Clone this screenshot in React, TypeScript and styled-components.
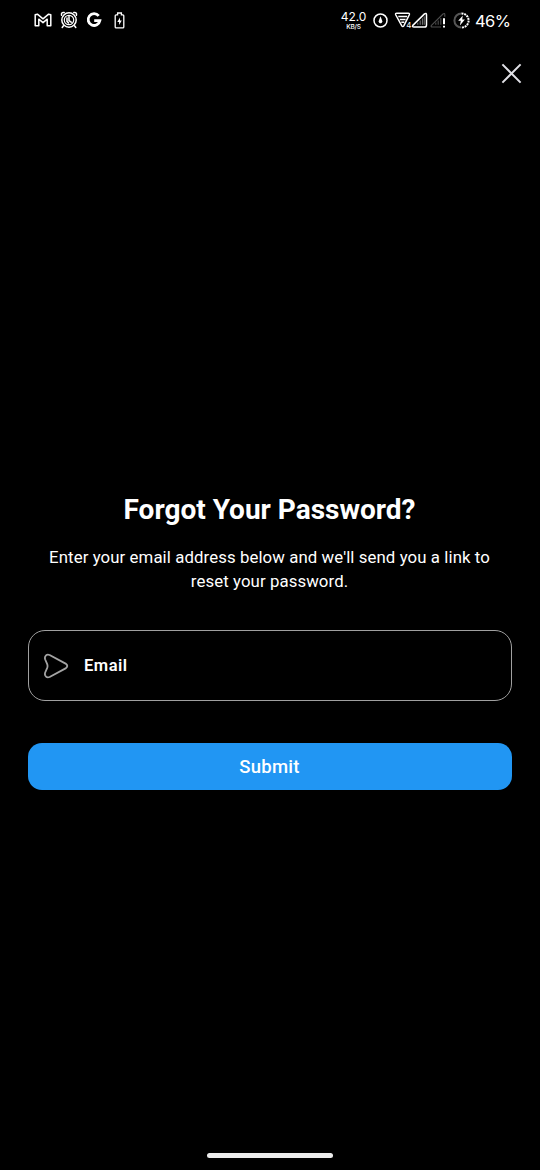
import React from "react";
import styled, { createGlobalStyle } from "styled-components";

const GlobalStyle = createGlobalStyle`
  *, *::before, *::after { box-sizing: border-box; }
  body { margin: 0; background: #000; font-family: Roboto, sans-serif; color: #fff; }
  svg { display: block; flex: none; }
`;

const Screen = styled.main`
  width: 540px;
  height: 1170px;
  display: flex;
  flex-direction: column;
  background: #000;
  overflow: hidden;
`;

const StatusBar = styled.header`
  height: 40px;
  padding: 0 30px 0 34px;
  display: flex;
  align-items: center;
  justify-content: space-between;
`;

const StatusGroup = styled.div`
  display: flex;
  align-items: center;
`;

const Gap = styled.span<{ $w: number }>`
  width: ${(p) => p.$w}px;
  flex: none;
`;

const Speed = styled.div`
  width: 25px;
  padding-top: 1px;
  display: flex;
  flex-direction: column;
  align-items: center;
  white-space: nowrap;
`;

const SpeedValue = styled.span`
  font: 400 12px/12px Inter, sans-serif;
  letter-spacing: -0.1px;
`;

const SpeedUnit = styled.span`
  font: 500 6.5px/8px Inter, sans-serif;
  letter-spacing: -0.2px;
`;

const Battery = styled.span`
  width: 35px;
  padding-top: 1px;
  font: 400 16.5px/20px Inter, sans-serif;
  letter-spacing: -0.6px;
  white-space: nowrap;
`;

const TopBar = styled.div`
  height: 68px;
  padding: 23px 18px 0;
  display: flex;
  justify-content: flex-end;
  align-items: flex-start;
`;

const IconButton = styled.button`
  padding: 0;
  border: 0;
  background: none;
  color: #e0e0e6;
`;

const Form = styled.form`
  flex: 1;
  padding: 383px 28px 0;
  display: flex;
  flex-direction: column;
`;

const Title = styled.h1`
  margin: 0 1px 0 0;
  text-align: center;
  font-size: 28px;
  line-height: 38px;
  font-weight: 700;
`;

const Description = styled.p`
  margin: 17px 1px 0 0;
  text-align: center;
  font-size: 16.8px;
  line-height: 23.5px;
  letter-spacing: 0.09px;
`;

const Field = styled.label`
  height: 71px;
  margin-top: 37px;
  padding: 0 0 0 14px;
  display: flex;
  align-items: center;
  gap: 15px;
  border: 1px solid #a0a0a0;
  border-radius: 17px;
  font-size: 16.5px;
  line-height: 20px;
  font-weight: 600;
  letter-spacing: 0.5px;

  svg { margin-top: 1px; }
`;

const SubmitButton = styled.button`
  height: 47px;
  margin-top: 42px;
  padding: 1px 1px 0 0;
  border: 0;
  border-radius: 14px;
  background: #2196f3;
  color: #fff;
  font: 500 18.5px/46px Roboto, sans-serif;
  letter-spacing: 0.3px;
`;

const HomeArea = styled.footer`
  height: 17px;
  display: flex;
  justify-content: center;
`;

const HomeIndicator = styled.div`
  width: 126px;
  height: 5px;
  border-radius: 3px;
  background: #ececec;
`;

const MailIcon = () => (
  <svg width="18" height="14" viewBox="0 0 18 14" fill="none" stroke="#fff" strokeWidth="1.5" strokeLinejoin="round">
    <path d="M1.2 12.8V1.8L3.4 1.2 9 5.8l5.6-4.6 2.2.6v11h-3.6V6.2L9 9.7 4.8 6.2v6.6z" />
  </svg>
);

const AlarmIcon = () => (
  <svg width="18" height="18" viewBox="0 0 18 18" fill="none" stroke="#fff" strokeWidth="1.5" strokeLinecap="round">
    <circle cx="9" cy="9" r="7.2" />
    <circle cx="9" cy="9" r="4.7" strokeWidth="1.2" />
    <path d="M9 5.4v4.2l2.2 1.6M7 7v3.4l1.6 1.6M1.6 4.2Q.8 1 4.2 1.6M13.8 1.6Q17.2 1 16.4 4.2M3.5 14.8l-1.3 1.7M14.5 14.8l1.3 1.7" />
  </svg>
);

const GoogleIcon = () => (
  <svg width="16" height="16" viewBox="0 0 16 16" fill="none" stroke="#fff" strokeWidth="2.8">
    <path d="M12.7 3.9A5.9 5.9 0 1 0 13.9 8.6H8.2" />
  </svg>
);

const BatteryIcon = () => (
  <svg width="11" height="17" viewBox="0 0 11 17" fill="none" stroke="#fff" strokeWidth="1.3">
    <path d="M3.6 2.8V1h3.8v1.8h1.4q1 0 1 1v11.1q0 1-1 1H2.2q-1 0-1-1V3.8q0-1 1-1z" />
    <path d="M6 5.5 3.3 10h1.8v3L7.8 8.6H6z" fill="#fff" stroke="none" />
  </svg>
);

const DataIcon = () => (
  <svg width="15" height="15" viewBox="0 0 15 15" fill="none" stroke="#fff" strokeWidth="1.5">
    <circle cx="7.5" cy="7.5" r="6.5" />
    <path d="M7.5 3.2 9 7.2A1.9 1.9 0 1 1 6 7.2z" fill="#fff" stroke="none" />
  </svg>
);

const SignalIcons = () => (
  <svg width="54" height="18" viewBox="0 0 54 18" fill="none" stroke="#fff" strokeWidth="1.5" strokeLinejoin="round">
    <path d="M2.8 2.2h11.4q1.8 0 1 1.8L9.8 14.8q-1 1.6-2 0L1.8 4q-.8-1.8 1-1.8z" />
    <path d="M4.3 5.5h8.8M5.8 8.4h5.8M7.3 11.3h3" />
    <text x="12.2" y="17" fill="#fff" stroke="none" fontFamily="Inter, sans-serif" fontSize="8">4</text>
    <path d="M18.8 14.4 30.5 2.9q2-1.2 2 .9v10.1q0 2.1-2 2.1H20q-2.2 0-1.2-1.6z" />
    <path d="M23.8 13.8v-2.2M26.2 13.8V9.4M28.4 13.8V7.4M30.2 13.8V5.4" stroke="#888" strokeWidth=".9" />
    <g stroke="#4d4d4d" strokeWidth="1.1">
      <path d="M47 16H38.4q-2 0-1-1.6L49 3q1.8-1.2 1.8.8v2" />
      <path d="M41.8 13.8v-2.2M44.2 13.8V9.4M46.8 13.8V7" />
    </g>
    <path d="M50 7.2v6M50 14.8v1.8" strokeWidth="2" />
  </svg>
);

const ChargingIcon = () => (
  <svg width="17" height="17" viewBox="0 0 17 17" fill="none" strokeWidth="2">
    <path d="M8.5 1.4a7.1 7.1 0 0 0 0 14.2" stroke="#555" />
    <path d="M8.5 1.4a7.1 7.1 0 0 1 0 14.2" stroke="#fff" strokeDasharray="2 .8" />
    <path d="M9.8 3.6 5.2 8.7h2.6l-.9 4.7 5-5.9H9.2z" fill="#fff" />
  </svg>
);

const CloseIcon = () => (
  <svg width="21" height="21" viewBox="0 0 21 21" fill="none" stroke="currentColor" strokeWidth="2">
    <path d="M1.4 1.4 19.6 19.6M19.6 1.4 1.4 19.6" />
  </svg>
);

const SendIcon = () => (
  <svg width="26" height="26" viewBox="0 0 26 26" fill="none" stroke="#a4a4a4" strokeWidth="1.8" strokeLinejoin="round">
    <path d="M6.6 2 22.6 10.6Q26 13 22.6 15.4L6.6 24Q3.7 25.2 2.3 22.6Q1.6 21.2 2.2 19.5L4.1 15.2Q5 13 4.1 10.8L2.2 6.5Q1.6 4.8 2.3 3.4Q3.7.8 6.6 2z" />
  </svg>
);

export default function App() {
  return (
    <>
      <GlobalStyle />
      <Screen>
        <StatusBar>
          <StatusGroup>
            <MailIcon />
            <Gap $w={8} />
            <AlarmIcon />
            <Gap $w={8} />
            <GoogleIcon />
            <Gap $w={12} />
            <BatteryIcon />
          </StatusGroup>
          <StatusGroup>
            <Speed>
              <SpeedValue>42.0</SpeedValue>
              <SpeedUnit>KB/S</SpeedUnit>
            </Speed>
            <Gap $w={7} />
            <DataIcon />
            <Gap $w={6} />
            <SignalIcons />
            <Gap $w={5} />
            <ChargingIcon />
            <Gap $w={5} />
            <Battery>46%</Battery>
          </StatusGroup>
        </StatusBar>
        <TopBar>
          <IconButton aria-label="Close">
            <CloseIcon />
          </IconButton>
        </TopBar>
        <Form>
          <Title>Forgot Your Password?</Title>
          <Description>
            Enter your email address below and we'll send you a link to
            <br />
            reset your password.
          </Description>
          <Field>
            <SendIcon />
            Email
          </Field>
          <SubmitButton type="button">Submit</SubmitButton>
        </Form>
        <HomeArea>
          <HomeIndicator />
        </HomeArea>
      </Screen>
    </>
  );
}
